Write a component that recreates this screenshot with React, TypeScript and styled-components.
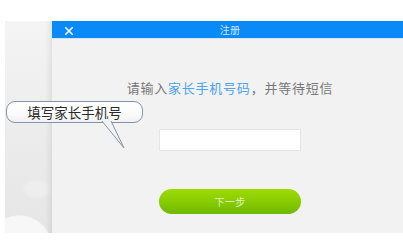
import React from "react";
import styled, { createGlobalStyle } from "styled-components";

const Global = createGlobalStyle`
  html, body { margin: 0; padding: 0; background: #ffffff; overflow: hidden; }
  body { font-family: "Noto Sans CJK SC", "Noto Sans", sans-serif; }
  #root { width: 403px; height: 234px; overflow: hidden; }
`;

const Page = styled.div`
  position: relative;
  width: 403px;
  height: 234px;
  display: flex;
  flex-direction: column;
  padding-top: 21px;
  box-sizing: border-box;
`;

const Stage = styled.div`
  display: flex;
  flex: 1;
  padding-left: 5px;
  padding-bottom: 1px;
`;

const SideStrip = styled.div`
  width: 47px;
  flex-shrink: 0;
  background:
    linear-gradient(to right, rgba(0,0,0,0) 0, rgba(0,0,0,0) 40px, rgba(0,0,0,0.035) 44px, rgba(0,0,0,0.07) 47px),
    radial-gradient(circle at 14px 228px, #f7f7f7 0, #f7f7f7 33px, rgba(247,247,247,0) 34px),
    radial-gradient(ellipse 15px 10px at 32px 168px, #eeeeee 0, #eeeeee 70%, rgba(238,238,238,0) 100%),
    linear-gradient(to bottom, #f4f4f4 0, #ebebeb 60%, #e6e6e6 100%);
`;

const Dialog = styled.div`
  width: 356px;
  flex-shrink: 0;
  display: flex;
  flex-direction: column;
  background: #f2f2f2;
`;

const Header = styled.div`
  height: 17px;
  display: grid;
  grid-template-columns: 1fr auto 1fr;
  align-items: center;
  background: #0a8af6;
  border-bottom: 1px solid #d6e6f4;
`;

const CloseButton = styled.div`
  justify-self: start;
  margin-left: 13px;
  margin-top: 2px;
  width: 8px;
  height: 8px;
  display: flex;
`;

const Title = styled.div`
  font-size: 10px;
  line-height: 17px;
  color: rgba(255, 255, 255, 0.82);
  letter-spacing: 0.3px;
`;

const Body = styled.div`
  display: flex;
  flex-direction: column;
  align-items: center;
  padding-top: 41px;
`;

const Prompt = styled.div`
  font-size: 13px;
  line-height: 16px;
  color: #777777;
  letter-spacing: 0.75px;
  white-space: nowrap;
`;

const Highlight = styled.span`
  color: #4da3ec;
`;

const PhoneInput = styled.input`
  margin-top: 33px;
  width: 142px;
  height: 22px;
  box-sizing: border-box;
  border: 1px solid #e6e6e6;
  background: #ffffff;
  outline: none;
  padding: 0 6px;
`;

const NextButton = styled.button`
  margin-top: 38px;
  width: 142px;
  height: 25px;
  border: none;
  border-radius: 13px;
  background: linear-gradient(to bottom, #9ddb04 0%, #88cc02 50%, #6fb800 100%);
  color: rgba(255, 255, 255, 0.78);
  font-family: "Noto Sans CJK SC", "Noto Sans", sans-serif;
  font-size: 10px;
  letter-spacing: 0.3px;
  padding: 0;
  cursor: pointer;
`;

const Bubble = styled.div`
  position: absolute;
  left: 6px;
  top: 101px;
  width: 137px;
  height: 22px;
  box-sizing: border-box;
  border: 1px solid #8494a6;
  border-radius: 9px;
  background: linear-gradient(to bottom, #ffffff 0%, #fbfbfb 60%, #f1f1f1 100%);
  display: flex;
  align-items: center;
  justify-content: center;
  font-size: 13.5px;
  color: #2a2a2a;
  white-space: nowrap;
`;

const Tail = styled.svg`
  position: absolute;
  left: 94px;
  top: 19px;
  overflow: visible;
`;

export default function App() {
  return (
    <>
      <Global />
      <Page>
        <Stage>
          <SideStrip />
          <Dialog>
            <Header>
              <CloseButton>
                <svg width="8" height="8" viewBox="0 0 8 8">
                  <path d="M0.8 0.8 L7.2 7.2 M7.2 0.8 L0.8 7.2" stroke="#ffffff" strokeWidth="1.5" strokeLinecap="square" />
                </svg>
              </CloseButton>
              <Title>注册</Title>
              <span />
            </Header>
            <Body>
              <Prompt>
                请输入<Highlight>家长手机号码</Highlight>，并等待短信
              </Prompt>
              <PhoneInput type="tel" aria-label="家长手机号" />
              <NextButton>下一步</NextButton>
            </Body>
          </Dialog>
        </Stage>
        <Bubble>
          填写家长手机号
          <Tail width="24" height="28" viewBox="0 0 24 28">
            <path d="M1 0 L23 27 L10 0" fill="#f3f3f3" stroke="#8494a6" strokeWidth="1" strokeLinejoin="miter" />
            <rect x="1.7" y="-2" width="7.6" height="2.6" fill="#f1f1f1" />
          </Tail>
        </Bubble>
      </Page>
    </>
  );
}
